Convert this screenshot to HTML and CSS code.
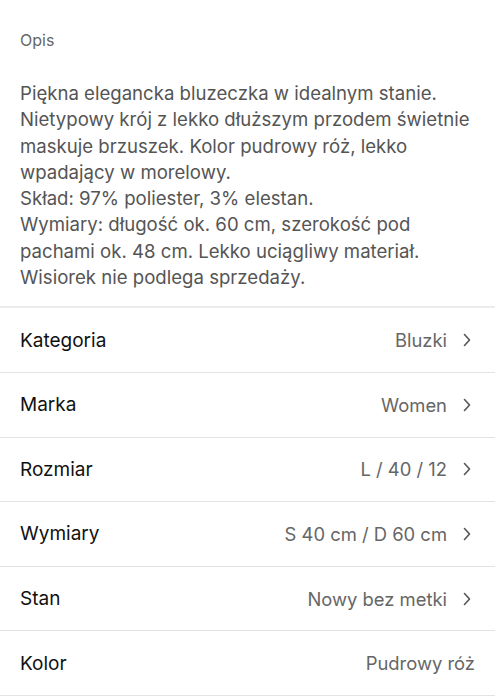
FILE: index.html
```html
<!DOCTYPE html>
<html lang="pl">
<head>
    <meta charset="UTF-8">
    <meta name="viewport" content="width=device-width, initial-scale=1.0">
    <title>Opis przedmiotu</title>
    <link rel="stylesheet" href="styles.css">
</head>
<body>
    <section class="description">
        <h2 class="section-title">Opis</h2>
        <p class="description-text">Piękna elegancka bluzeczka w idealnym stanie.<br>Nietypowy krój z lekko dłuższym przodem świetnie maskuje brzuszek. Kolor pudrowy róż, lekko wpadający w morelowy.<br>Skład: 97% poliester, 3% elestan.<br>Wymiary: długość ok. 60 cm, szerokość pod pachami ok. 48 cm. Lekko uciągliwy materiał.<br>Wisiorek nie podlega sprzedaży.</p>
    </section>

    <ul class="details">
        <li class="detail-row">
            <span class="detail-label">Kategoria</span>
            <span class="detail-value">Bluzki</span>
            <svg class="chevron" viewBox="0 0 8 14"><path d="M1.5 1.5 L6.5 7 L1.5 12.5"/></svg>
        </li>
        <li class="detail-row">
            <span class="detail-label">Marka</span>
            <span class="detail-value">Women</span>
            <svg class="chevron" viewBox="0 0 8 14"><path d="M1.5 1.5 L6.5 7 L1.5 12.5"/></svg>
        </li>
        <li class="detail-row">
            <span class="detail-label">Rozmiar</span>
            <span class="detail-value">L / 40 / 12</span>
            <svg class="chevron" viewBox="0 0 8 14"><path d="M1.5 1.5 L6.5 7 L1.5 12.5"/></svg>
        </li>
        <li class="detail-row">
            <span class="detail-label">Wymiary</span>
            <span class="detail-value">S 40 cm / D 60 cm</span>
            <svg class="chevron" viewBox="0 0 8 14"><path d="M1.5 1.5 L6.5 7 L1.5 12.5"/></svg>
        </li>
        <li class="detail-row">
            <span class="detail-label">Stan</span>
            <span class="detail-value">Nowy bez metki</span>
            <svg class="chevron" viewBox="0 0 8 14"><path d="M1.5 1.5 L6.5 7 L1.5 12.5"/></svg>
        </li>
        <li class="detail-row">
            <span class="detail-label">Kolor</span>
            <span class="detail-value">Pudrowy róż</span>
        </li>
    </ul>
</body>
</html>
```

FILE: styles.css
```css
body {
    margin: 0;
    padding: 0;
    background: #fff;
    font-family: 'Inter', 'Noto Sans', sans-serif;
    color: #1a1a1a;
}

.description {
    padding: 28px 20px 16px;
}

.section-title {
    margin: 0;
    font-size: 16px;
    font-weight: 400;
    line-height: 24px;
    color: #666;
}

.description-text {
    margin: 28px 0 0;
    font-size: 18.6px;
    line-height: 26.3px;
    color: #555;
}

.details {
    list-style: none;
    margin: 0;
    padding: 0;
    border-top: 2px solid #ececec;
}

.detail-row {
    display: flex;
    align-items: center;
    height: 63.6px;
    padding: 0 20px;
    border-bottom: 1px solid #e3e3e3;
}

.detail-label {
    flex: 1;
    font-size: 19px;
    font-weight: 400;
    color: #111;
}

.detail-value {
    font-size: 18.4px;
    color: #666;
}

.chevron {
    width: 8px;
    height: 14px;
    margin-left: 16px;
    margin-right: 4px;
    fill: none;
    stroke: #555;
    stroke-width: 1.6;
    stroke-linecap: round;
    stroke-linejoin: round;
}
```
